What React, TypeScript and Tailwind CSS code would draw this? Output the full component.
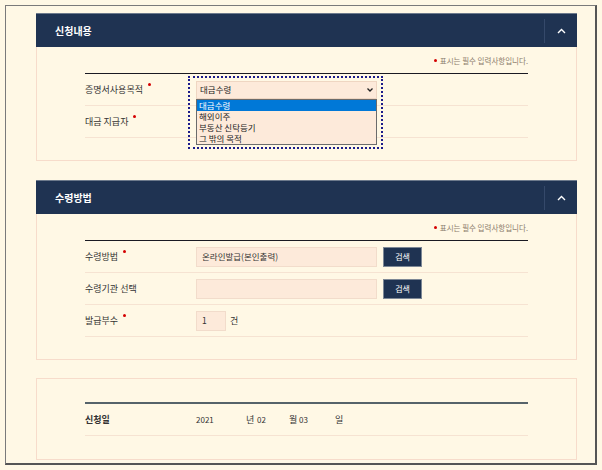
import React from "react";

const font = { fontFamily: '"Noto Sans CJK KR", "Noto Sans", sans-serif' };

const Req = () => (
    <span className="relative -top-[7px] ml-[5px] inline-block w-[3px] h-[3px] rounded-full bg-[#d40000]" />
);

const Header = ({ title }: { title: string }) => (
    <div className="flex h-[34px] items-center bg-[#1f3352] border-t border-[#6d7a8c]">
        <div className="flex-1 pl-[19px] text-[10px] font-bold text-white">{title}</div>
        <div className="flex h-[24px] w-[33px] items-center justify-center border-l border-[#35496a]">
            <svg width="9" height="6" viewBox="0 0 9 6">
                <path d="M1 5 L4.5 1.5 L8 5" stroke="#fff" strokeWidth="1.4" fill="none" />
            </svg>
        </div>
    </div>
);

const Notice = () => (
    <div className="flex h-[26px] items-end justify-end pb-[7px] text-[7.5px] text-[#8c7c6c]">
        <span className="relative -top-[4px] mr-[3px] inline-block w-[3px] h-[3px] rounded-full bg-[#d40000]" />
        표시는 필수 입력사항입니다.
    </div>
);

const Row = ({ label, req, children }: { label: string; req?: boolean; children?: React.ReactNode }) => (
    <div className="flex h-[32px] items-center border-b border-[#f6e3d2]">
        <div className="w-[111px] text-[9px] text-[#333]">
            {label}
            {req && <Req />}
        </div>
        <div className="flex flex-1 items-center">{children}</div>
    </div>
);

const SearchBtn = () => (
    <button className="ml-[6px] flex h-[20px] w-[39px] items-center justify-center bg-[#1f3352] border border-[#7d8896] text-[8px] text-white">
        검색
    </button>
);

const options = ["대금수령", "해외이주", "부동산 신탁등기", "그 밖의 목적"];

export default function App() {
    return (
        <div className="h-[470px] w-[602px] bg-[#fff8e5] pt-[5px] pl-[5px]" style={font}>
            <div className="h-[460px] w-[592px] border-t border-l border-[#7a7a7a] border-r-2 border-b-2 border-r-[#555] border-b-[#555] pt-[7px] pl-[30px]">
                {/* 신청내용 */}
                <div className="w-[541px]">
                    <Header title="신청내용" />
                    <div className="h-[114px] border border-t-0 border-[#f7dccb] px-[48px]">
                        <Notice />
                        <div className="border-t border-[#1a1a22]">
                            <Row label="증명서사용목적" req>
                                <div className="relative">
                                    <div className="flex h-[18px] w-[181px] items-center justify-between border border-[#efd6c2] bg-[#fdeada] px-[3px] text-[8.5px] text-[#222]">
                                        <span>대금수령</span>
                                        <svg width="6" height="4" viewBox="0 0 6 4">
                                            <path d="M0.5 0.5 L3 3 L5.5 0.5" stroke="#222" strokeWidth="1.3" fill="none" />
                                        </svg>
                                    </div>
                                    <div className="absolute left-0 top-[18px] z-10 w-[181px] border border-[#6b6b6b] bg-[#fdeada] text-[8.5px] leading-[11px] text-[#222]">
                                        {options.map((o, i) => (
                                            <div key={o} className={i === 0 ? "bg-[#0078d7] px-[2px] text-white" : "px-[2px]"}>
                                                {o}
                                            </div>
                                        ))}
                                    </div>
                                    <div className="pointer-events-none absolute -left-[8px] -top-[5px] z-20 h-[73px] w-[195px] border-2 border-dotted border-[#1c1c8a]" />
                                </div>
                            </Row>
                            <Row label="대금 지급자" req />
                        </div>
                    </div>
                </div>

                {/* 수령방법 */}
                <div className="mt-[19px] w-[541px]">
                    <Header title="수령방법" />
                    <div className="h-[146px] border border-t-0 border-[#f7dccb] px-[48px]">
                        <Notice />
                        <div className="border-t border-[#1a1a22]">
                            <Row label="수령방법" req>
                                <div className="flex h-[20px] w-[181px] items-center border border-[#f2dccb] bg-[#fdeada] px-[5px] text-[8.5px] text-[#333]">
                                    온라인발급(본인출력)
                                </div>
                                <SearchBtn />
                            </Row>
                            <Row label="수령기관 선택">
                                <div className="h-[20px] w-[181px] border border-[#f2dccb] bg-[#fdeada]" />
                                <SearchBtn />
                            </Row>
                            <Row label="발급부수" req>
                                <div className="flex h-[20px] w-[30px] items-center border border-[#f2dccb] bg-[#fdeada] px-[5px] text-[8.5px] text-[#333]">
                                    1
                                </div>
                                <span className="ml-[4px] text-[9px] text-[#333]">건</span>
                            </Row>
                        </div>
                    </div>
                </div>

                {/* 신청일 */}
                <div className="mt-[18px] h-[82px] w-[541px] border border-[#f7dccb] px-[48px] pt-[23px]">
                    <div className="border-t-2 border-[#56636a]">
                        <div className="flex h-[32px] items-center border-b border-[#f6e3d2] text-[#333]">
                            <div className="w-[111px] text-[9px] font-bold">신청일</div>
                            <span className="w-[50px] text-[8px]">2021</span>
                            <span className="w-[11px] text-[9px]">년</span>
                            <span className="w-[32px] text-[8px]">02</span>
                            <span className="w-[10px] text-[9px]">월</span>
                            <span className="w-[36px] text-[8px]">03</span>
                            <span className="text-[9px]">일</span>
                        </div>
                    </div>
                </div>
            </div>
        </div>
    );
}
